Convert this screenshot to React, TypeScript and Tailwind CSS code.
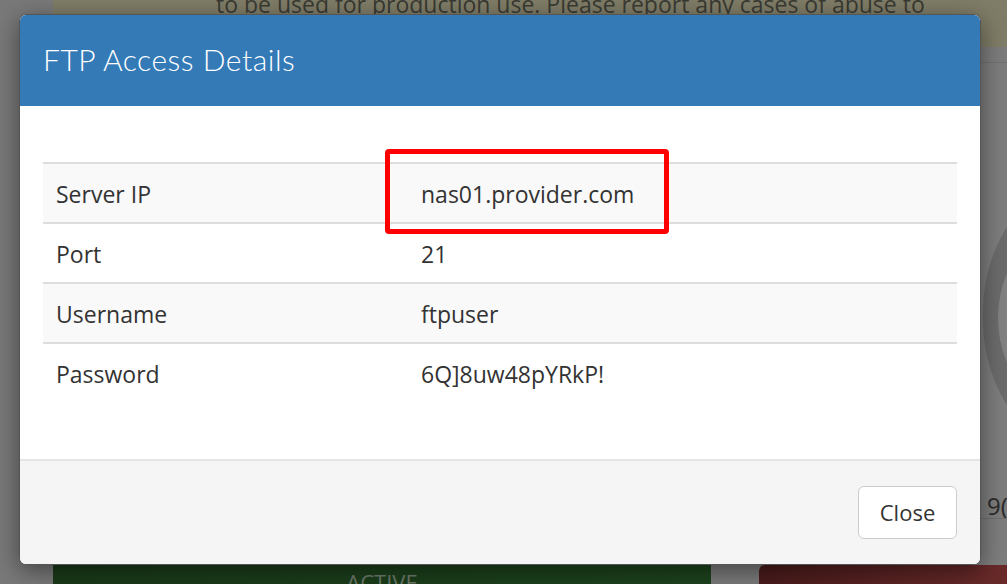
import React from "react";

const rows: { label: string; value: string }[] = [
  { label: "Server IP", value: "nas01.provider.com" },
  { label: "Port", value: "21" },
  { label: "Username", value: "ftpuser" },
  { label: "Password", value: "6Q]8uw48pYRkP!" },
];

export default function App() {
  return (
    <div
      className="relative w-[1007px] h-[584px] overflow-hidden bg-[#7b7b7b]"
      style={{ fontFamily: '"Open Sans", "Noto Sans", sans-serif' }}
    >
      {/* dimmed page behind the dialog */}
      <div className="flex h-full">
        <div className="w-[53px] bg-[#797979]" />
        <div className="flex-1 flex flex-col">
          <div className="h-[47px] bg-[#7f7d67] pl-[163px] text-[23px] leading-[24px] text-[#3a3a33] whitespace-nowrap overflow-hidden">
            <div className="-mt-[8px]">to be used for production use. Please report any cases of abuse to</div>
          </div>
          <div className="h-[16px] bg-[#7c7c7c] border-b border-[#727272]" />
          <div className="flex-1 relative bg-[#7d7d7d]">
            <div className="absolute left-[930px] top-[88px] w-[320px] h-[330px] rounded-full bg-[#6b6b6b]" />
            <div className="absolute left-[945px] top-[140px] w-[260px] h-[230px] rounded-full bg-[#828282]" />
            <div className="absolute left-[934px] top-[425px] text-[24px] text-[#2a2a2a]">9(</div>
            <div className="absolute left-[900px] top-[455px] w-[120px] border-t border-[#6f6f6f]" />
          </div>
          <div className="h-[19px] flex gap-[48px]">
            <div className="w-[658px] bg-gradient-to-r from-[#1a3a19] to-[#1d431d] text-center text-[22px] leading-[34px] text-[#6e7a6c] overflow-hidden">
              ACTIVE
            </div>
            <div className="flex-1 rounded-tl-[6px] bg-gradient-to-r from-[#4a1b1b] to-[#6a2a2a]" />
          </div>
        </div>
      </div>

      {/* dialog */}
      <div className="absolute left-[19px] top-[14px] w-[962px] h-[551px] flex flex-col rounded-[7px] overflow-hidden bg-white border border-[#555] shadow-[0_6px_24px_rgba(0,0,0,0.45)]">
        <div className="h-[91px] shrink-0 bg-[#337ab7] pl-[23px] flex items-center">
          <h4
            className="text-[30px] font-light text-white leading-none tracking-[0.5px] pb-[4px]"
            style={{ fontFamily: 'Lato, "Open Sans", sans-serif' }}
          >
            FTP Access Details
          </h4>
        </div>
        <div className="flex-1 px-[23px] pt-[56px]">
          <div className="text-[23px] text-[#333]">
            {rows.map((r, i) => (
              <div
                key={r.label}
                className={
                  "h-[60px] flex items-center pt-[2px] border-t-2 border-[#dddddd] " +
                  (i % 2 === 0 ? "bg-[#f9f9f9]" : "bg-white")
                }
              >
                <div className="w-[365px] pl-[13px]">{r.label}</div>
                <div className="flex-1 pl-[13px]">{r.value}</div>
              </div>
            ))}
          </div>
        </div>
        <div className="h-[105px] shrink-0 bg-[#f5f5f5] border-t-2 border-[#e5e5e5] flex items-center justify-end pr-[23px]">
          <button className="w-[99px] h-[53px] rounded-[6px] border border-[#cccccc] bg-white text-[22px] text-[#333]">
            Close
          </button>
        </div>
      </div>

      {/* highlight around the server address */}
      <div className="absolute left-[385px] top-[149px] w-[284px] h-[85px] border-[5px] border-[#ff0000] rounded-[4px]" />
    </div>
  );
}
